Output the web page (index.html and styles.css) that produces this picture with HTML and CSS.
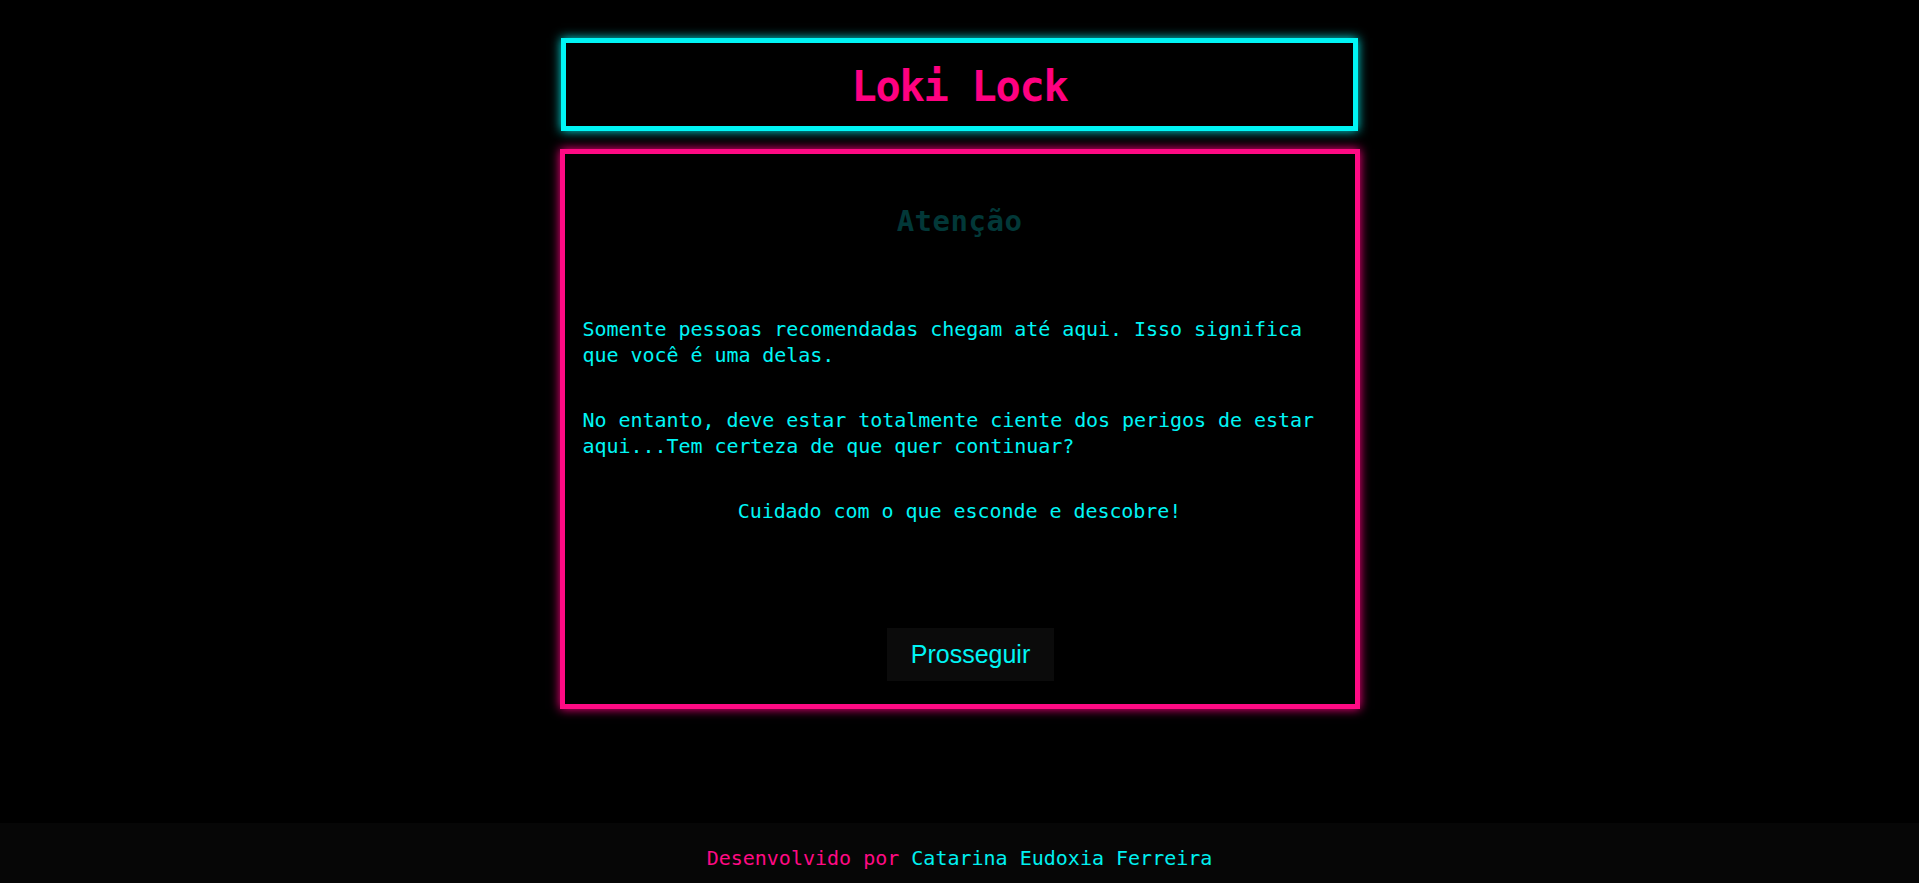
FILE: index.html
```html
<!DOCTYPE html>
<html lang="pt-BR">
<head>
<meta charset="utf-8">
<title>Loki Lock</title>
<link rel="stylesheet" href="styles.css">
</head>
<body>
<div class="page">
  <header class="header-box">
    <h1 class="title">Loki Lock</h1>
  </header>
  <main class="main-box">
    <h2 class="heading">Atenção</h2>
    <p class="text first">Somente pessoas recomendadas chegam até aqui. Isso significa que você é uma delas.</p>
    <p class="text">No entanto, deve estar totalmente ciente dos perigos de estar aqui...Tem certeza de que quer continuar?</p>
    <p class="text center">Cuidado com o que esconde e descobre!</p>
    <div class="actions">
      <button class="btn" type="button">Prosseguir</button>
    </div>
  </main>
</div>
<footer class="footer">
  <span class="pink">Desenvolvido por</span> <span class="cyan">Catarina Eudoxia Ferreira</span>
</footer>
</body>
</html>
```

FILE: styles.css
```css
html, body {
  margin: 0;
  padding: 0;
  background: #000;
  height: 100%;
}
body {
  font-family: "DejaVu Sans Mono", "Liberation Mono", monospace;
  display: flex;
  flex-direction: column;
  overflow: hidden;
}
.page {
  flex: 1;
  display: flex;
  flex-direction: column;
  align-items: center;
  padding-top: 38px;
}
.header-box {
  box-sizing: border-box;
  width: 797px;
  height: 93px;
  border: 5px solid #00f5f5;
  box-shadow: 0 0 10px #00e0e0;
  padding-top: 20px;
  text-align: center;
}
.title {
  margin: 0;
  font-size: 42px;
  line-height: 48px;
  letter-spacing: -1.3px;
  font-weight: bold;
  color: #ff0080;
}
.main-box {
  box-sizing: border-box;
  width: 800px;
  height: 560px;
  margin-top: 18px;
  border: 5px solid #ff0a84;
  box-shadow: 0 0 10px #ff0080;
  padding: 0 18px;
  display: flex;
  flex-direction: column;
}
.heading {
  margin: 50px 0 0;
  text-align: center;
  font-size: 29px;
  line-height: 34px;
  letter-spacing: 0.5px;
  font-weight: bold;
  color: #023838;
}
.text {
  margin: 40px 0 0;
  font-size: 20px;
  line-height: 25.5px;
  color: #00f5f5;
  letter-spacing: -0.05px;
}
.text.first {
  margin-top: 79px;
}
.text.center {
  text-align: center;
}
.actions {
  display: flex;
  justify-content: center;
  margin-top: auto;
  margin-bottom: 23px;
}
.btn {
  margin-left: 22px;
  background: #0b0b0b;
  color: #00f5f5;
  border: none;
  font-family: "Liberation Sans", Arial, sans-serif;
  font-size: 25px;
  line-height: 29px;
  padding: 12px 24px;
}
.footer {
  background: #060606;
  text-align: center;
  font-size: 20px;
  line-height: 26px;
  padding: 22px 0 12px;
}
.pink {
  color: #ff0a84;
}
.cyan {
  color: #00f0f0;
}
```
